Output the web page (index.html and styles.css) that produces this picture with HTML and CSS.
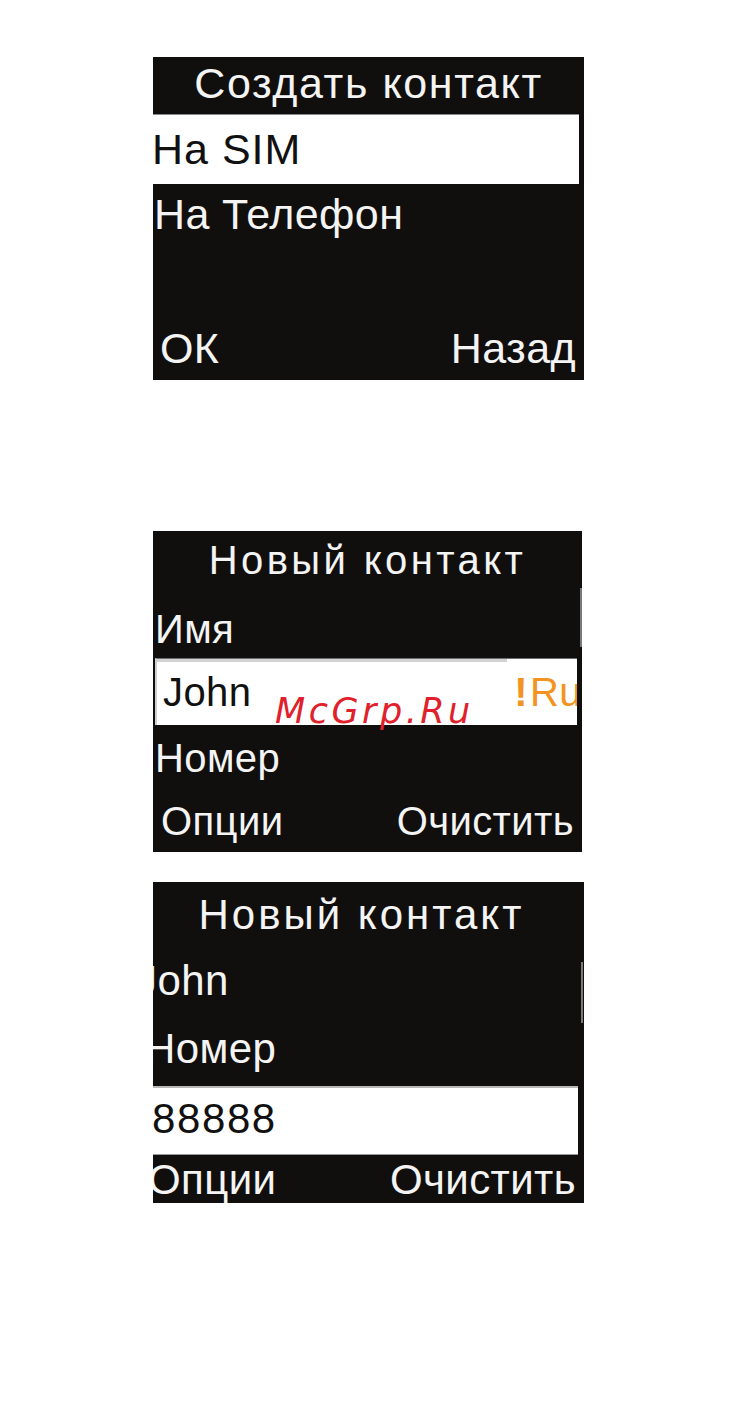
FILE: index.html
```html
<!DOCTYPE html>
<html lang="ru">
<head>
<meta charset="utf-8">
<title>Новый контакт</title>
<link rel="stylesheet" href="styles.css">
</head>
<body>
<main class="page">
  <section class="screen s1">
    <div class="title">Создать контакт</div>
    <div class="row sel">На SIM</div>
    <div class="row plain r3">На Телефон</div>
    <div class="fill"></div>
    <div class="keys"><span class="kl">ОК</span><span class="kr">Назад</span></div>
  </section>

  <section class="screen s2">
    <div class="title">Новый контакт</div>
    <div class="row lab2">Имя</div>
    <div class="field f2"><span class="val">John</span><span class="ime"><span class="bang">!</span>Ru</span></div>
    <div class="row lab3">Номер</div>
    <div class="fill"></div>
    <div class="keys"><span class="kl">Опции</span><span class="kr">Очистить</span></div>
    <div class="scroll sc2"></div>
    <div class="mark">McGrp.Ru</div>
  </section>

  <section class="screen s3">
    <div class="title">Новый контакт</div>
    <div class="row j3"><span class="shiftj">John</span></div>
    <div class="row n3"><span class="shiftn">Номер</span></div>
    <div class="field f3"><span class="shiftd">88888</span></div>
    <div class="fill"></div>
    <div class="keys"><span class="kl shifto">Опции</span><span class="kr">Очистить</span></div>
    <div class="scroll sc3"></div>
  </section>
</main>
</body>
</html>
```

FILE: styles.css
```css
html, body {
  margin: 0;
  padding: 0;
  background: #ffffff;
}
.page {
  width: 738px;
  height: 1418px;
  display: flex;
  flex-direction: column;
  padding-left: 153px;
  box-sizing: border-box;
  font-family: "Liberation Sans", Arial, sans-serif;
}
.screen {
  position: relative;
  background: #110f0d;
  color: #f4f4f4;
  display: flex;
  flex-direction: column;
  overflow: hidden;
  line-height: 1;
  box-sizing: border-box;
  white-space: nowrap;
  letter-spacing: 0.4px;
}
.s1 { margin-top: 57px; width: 431px; height: 323px; font-size: 43px; }
.s2 { margin-top: 151px; width: 429px; height: 321px; font-size: 40px; }
.s3 { margin-top: 30px; width: 431px; height: 321px; font-size: 42px; }

.title { text-align: center; box-sizing: border-box; }
.s1 .title { height: 57px; padding-top: 5px; letter-spacing: 1.6px; }
.s2 .title { height: 60px; padding-top: 9px; letter-spacing: 3.4px; }
.s3 .title { height: 68px; padding-top: 12px; padding-right: 14px; letter-spacing: 3px; }

.row { box-sizing: border-box; }
.sel {
  background: #ffffff;
  color: #111;
  height: 70px;
  margin-right: 5px;
  border-top: 1px solid #8a8a8a;
  padding-top: 13px;
  text-indent: -1px;
  letter-spacing: 1px;
}
.r3 { padding-top: 9px; padding-left: 1px; }
.fill { flex: 1; }

.keys {
  display: flex;
  justify-content: space-between;
}
.s1 .keys { padding: 0 8px 10px 7px; }
.s2 .keys { padding: 0 8px 11px 8px; }
.s3 .keys { padding: 0 8px 2px 0; }

.lab2 { height: 67px; padding-top: 18px; padding-left: 2px; }
.lab3 { padding-top: 13px; padding-left: 2px; }

.field {
  background: #ffffff;
  color: #111;
  box-sizing: border-box;
  display: flex;
  position: relative;
  overflow: hidden;
}
.f2 {
  height: 67px;
  margin-left: 2px;
  margin-right: 5px;
  border-top: 1px solid #6e6e6e;
  border-left: 2px solid #cfcfcf;
  padding-top: 13px;
  padding-left: 6px;
}
.f2::before {
  content: "";
  position: absolute;
  left: 0;
  top: 0;
  width: 350px;
  height: 3px;
  background: #d2d2d2;
}
.ime {
  margin-left: auto;
  color: #f39422;
  margin-right: -5px;
}
.bang {
  font-weight: bold;
  margin-right: 2px;
}

.f3 {
  height: 69px;
  margin-right: 6px;
  border-top: 2px solid #b8b8b8;
  border-bottom: 1px solid #9a9a9a;
  padding-top: 10px;
}
.j3 { height: 68px; padding-top: 10px; }
.n3 { height: 68px; padding-top: 10px; }
.shiftj { margin-left: -17px; }
.shiftn { margin-left: -8px; }
.shiftd { margin-left: -1px; letter-spacing: 1.6px; }
.shifto { margin-left: -5px; }

.scroll {
  position: absolute;
  width: 2px;
  background: #7a7a7a;
}
.sc2 { left: 427px; top: 57px; height: 59px; }
.sc3 { left: 428px; top: 80px; height: 61px; }

.mark {
  position: absolute;
  left: 122px;
  top: 163px;
  font-family: "DejaVu Sans", sans-serif;
  font-style: italic;
  font-size: 35px;
  letter-spacing: 3.5px;
  color: #e0212b;
}
```
